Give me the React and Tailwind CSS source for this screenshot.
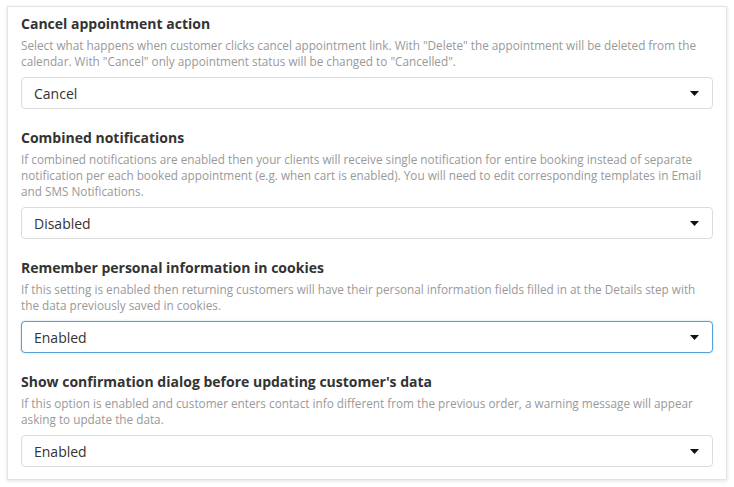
const sections = [
  {
    title: 'Cancel appointment action',
    text: 'Select what happens when customer clicks cancel appointment link. With "Delete" the appointment will be deleted from the calendar. With "Cancel" only appointment status will be changed to "Cancelled".',
    value: 'Cancel',
  },
  {
    title: 'Combined notifications',
    text: 'If combined notifications are enabled then your clients will receive single notification for entire booking instead of separate notification per each booked appointment (e.g. when cart is enabled). You will need to edit corresponding templates in Email and SMS Notifications.',
    value: 'Disabled',
  },
  {
    title: 'Remember personal information in cookies',
    text: 'If this setting is enabled then returning customers will have their personal information fields filled in at the Details step with the data previously saved in cookies.',
    value: 'Enabled',
    focused: true,
  },
  {
    title: "Show confirmation dialog before updating customer's data",
    text: 'If this option is enabled and customer enters contact info different from the previous order, a warning message will appear asking to update the data.',
    value: 'Enabled',
  },
];

const Select = ({ value, focused }) => (
  <div
    className={
      'flex h-8 items-center justify-between rounded-[4px] border bg-white pl-3 pr-[13px] text-[14px] text-[#333] ' +
      (focused ? 'border-[#5a9fd6] shadow-[0_0_2px_rgba(90,159,214,0.5)]' : 'border-[#dcdcdc]')
    }
  >
    <span>{value}</span>
    <svg width="9" height="5" viewBox="0 0 9 5">
      <path d="M0 0h9L4.5 5z" fill="#111" />
    </svg>
  </div>
);

const App = () => {
  return (
    <div className="h-[487px] w-[734px] bg-white pl-[7px] pt-[6px]" style={{ fontFamily: '"Open Sans", sans-serif' }}>
      <div className="w-[720px] border border-[#e3e3e3] bg-white px-[13px] pb-[12px] pt-[7px] shadow-[0_1px_4px_rgba(0,0,0,0.12)]">
        <div className="flex flex-col gap-[19px]">
          {sections.map((s) => (
            <div key={s.title}>
              <h3 className="text-[14px] font-bold leading-5 text-[#333]">{s.title}</h3>
              <p className="mt-[3px] text-[11.75px] leading-[16px] text-[#999]">{s.text}</p>
              <div className="mt-[8px]">
                <Select value={s.value} focused={s.focused} />
              </div>
            </div>
          ))}
        </div>
      </div>
    </div>
  );
};

export default App;
